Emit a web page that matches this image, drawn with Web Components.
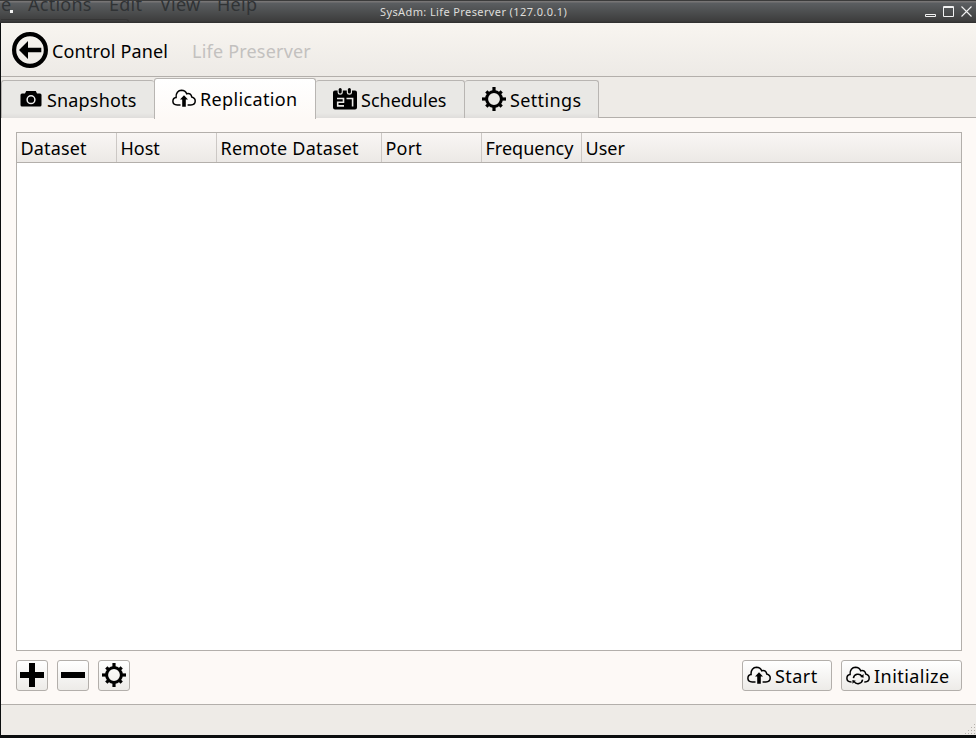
<!DOCTYPE html>
<html lang="en"><head><meta charset="utf-8"><title>SysAdm: Life Preserver</title>
<style>html,body{margin:0;height:100%;overflow:hidden;background:#0b0d0e}body{font-family:"Noto Sans",sans-serif;font-size:18px;color:#000}</style></head>
<body><sys-window></sys-window>
<script>
const define=(name,html)=>customElements.define(name,class extends HTMLElement{
 constructor(){super();this.attachShadow({mode:'open'});}
 connectedCallback(){const t=document.createElement('template');t.innerHTML='<style>*{box-sizing:border-box}</style>'+(typeof html==='function'?html(this):html);this.shadowRoot.replaceChildren(t.content.cloneNode(true));}
});
const cloud=(a,b)=>`<path d="M${a} 17.300H5.200C2.500 17.300.9 15.900.9 13.700c0-2.200 1.500-3.600 3.200-3.800C3.600 5.500 6.300 2.800 9.400 2.700c2.700 0 4.500 1.400 5.300 3.500 3-.8 4.800.7 5 3.200 2.200.5 3.500 2 3.500 4 0 2.400-1.700 3.900-4.300 3.900h${b}" fill="none" stroke="#000" stroke-width="1.500"/>`;
const gearTeeth=[0,45,90,135,180,225,270,315].map(a=>`<path d="M10.400 ${a%90?1.1:0}h3.200V5h-3.200z" transform="rotate(${a} 12 12)"/>`).join('');
const icons={
 back:'<circle cx="18" cy="18" r="15.900" fill="none" stroke="#000" stroke-width="4.200"/><path d="M7 18 16 9v6.800h13.300v4.400H16V27z"/>',
 camera:'<path d="M3 6.500h3l1.200-2.500h9.600L18 6.500h3q1.500 0 1.500 1.500v10q0 1.500-1.500 1.500H3q-1.500 0-1.500-1.500V8q0-1.500 1.500-1.500z"/><circle cx="12" cy="12.700" r="3.900" fill="none" stroke="#eee" stroke-width="1.500"/>',
 upload:'<g transform="translate(0 1.600)">'+cloud(8.5,-3.3)+'<path d="m12 7.700 4 4.300h-2.200v7.200h-3.600V12H8z"/></g>',
 sync:'<g transform="translate(0 1.600)">'+cloud(5.5,-.6)+'<path d="M7.400 13.500a4.700 4.700 0 0 1 8.500-1.900M16.600 15.100a4.700 4.700 0 0 1-8.500 1.900" fill="none" stroke="#000" stroke-width="1.500"/><path d="m14.200 12.400 3.400.7-.1-3.700zM9.800 16.200l-3.400-.7.1 3.700z"/></g>',
 calendar:'<path d="M2 3.600h20q2 0 2 2v15q0 2-2 2H2q-2 0-2-2v-15q0-2 2-2z"/><path d="M4.600 3v2.700q0 2 2.600 2t2.600-2V3zM13.800 3v2.700q0 2 2.600 2t2.600-2V3z" fill="#e9e8e5"/><rect x="5.700" y="1" width="3" height="5.600" rx="1.500"/><rect x="14.900" y="1" width="3" height="5.600" rx="1.500"/><path d="M4 11.500h6.500v3.700H4.700v3.700h6.300M13.500 11.500h6.100v8" fill="none" stroke="#e9e8e5" stroke-width="1.600"/>',
 gear:gearTeeth+'<circle cx="12" cy="12" r="7.400" fill="none" stroke="#000" stroke-width="3"/>',
 plus:'<path d="M9 0h6v9h9v6h-9v9H9v-9H0V9h9z"/>',
 minus:'<path d="M0 9h24v6H0z"/>'
};
define('sys-icon',e=>{const n=e.getAttribute('name');return `<style>:host{display:block;flex:none;width:24px;height:24px}svg{display:block;width:100%;height:100%;overflow:visible}</style><svg viewBox="${n==='back'?'0 0 36 36':'0 0 24 24'}">${icons[n]}</svg>`});
define('title-bar',`<style>:host{display:block;position:relative;height:23px;background:linear-gradient(#3b3b3b 0 1px,#777575 1px 2px,#5b5e61 3px,#4e5051 11px,#3d3d3d 21px,#2e2e2e);color:#deddda;font-size:11px;line-height:15px}
.ghost{position:absolute;left:0;top:-8px;color:#303335;font-size:18px;line-height:25px;white-space:nowrap;letter-spacing:.25px}.ghost span{position:absolute;top:0}
.title{position:absolute;left:380px;top:4px;white-space:nowrap;letter-spacing:.39px}
.edge{position:absolute;left:1px;top:19px;width:128px;height:4px;border-top:1px solid #353535;border-right:1px solid #353535;border-radius:0 3px 0 0}
.dot{position:absolute;left:10px;top:10px;width:3px;height:3px;background:#f1f1f1}
svg{position:absolute;left:925px;top:6px}</style><div class="edge"></div><div class="ghost"><span style="left:1px">e</span><span style="left:28px">Actions</span><span style="left:109px">Edit</span><span style="left:160px">View</span><span style="left:217px">Help</span></div><i class="dot"></i><span class="title">SysAdm: Life Preserver (127.0.0.1)</span>
<svg width="50" height="12" fill="none" stroke="#f1f1f1"><path d="M.5 8.500h10v2H.5zM18.500.5h10v10h-10zM18 1.500h11"/><path d="m36.500.5 10 10m0-10-10 10" stroke-width="1.100"/></svg>`);
define('crumb-bar',`<style>:host{display:flex;align-items:center;height:54px;padding:0 0 0 11px;background:linear-gradient(#f8f5f0,#edeae6);border-bottom:1px solid #b3afab}sys-icon{width:36px;height:36px;margin-top:1px}span{margin:4px 0 0 4px;line-height:25px;white-space:nowrap;letter-spacing:.15px}.off{color:#c3c1bf;margin-left:24px;letter-spacing:.2px}</style><sys-icon name="back"></sys-icon><span>Control Panel</span><span class="off">Life Preserver</span>`);
define('sys-tab',e=>`<style>:host{display:flex;align-items:flex-start;height:38px;margin-top:3px;padding:7px 0 0 17px;gap:4px;border:1px solid #b8b5b2;border-left-width:0;border-bottom:0;border-radius:3px 3px 0 0;background:linear-gradient(#e9e8e5 0 32px,#dfdddb);line-height:25px;white-space:nowrap}:host([active]){z-index:1;height:41px;margin-top:1px;padding-top:8px;border-left-width:1px;background:linear-gradient(#fff,#fdf9f6)}
sys-icon{margin-top:-1px}</style><sys-icon name="${e.getAttribute('icon')}"></sys-icon><slot></slot>`);
define('tab-bar',`<style>:host{display:flex;align-items:flex-start;height:41px;background:linear-gradient(#eeebe7 0 40px,#b3afab 40px)}</style><slot></slot>`);
define('data-table',()=>`<style>:host{display:flex;flex-direction:column;flex:1;border:1px solid #b3afab;background:#fff}.head{display:flex;height:30px;border-bottom:1px solid #b3afab;background:linear-gradient(#f9f6f4,#ece9e6)}.head span{height:29px;padding:3px 0 0 3.500px;border-right:1px solid #ccc8c5;line-height:25px;white-space:nowrap}.head span:last-child{flex:1;border:0}</style><div class="head">${[['Dataset',100,.15],['Host',100,0],['Remote Dataset',165,.2],['Port',100,.2],['Frequency',100,0],['User',379,0]].map(([t,w,s])=>`<span style="width:${w}px;letter-spacing:${s}px">${t}</span>`).join('')}</div>`);
define('sys-button',e=>`<style>:host{display:flex;height:31px;width:32px;padding:2px 3px;gap:4px;border:1px solid #b3afab;border-radius:3px;background:linear-gradient(#fff,#edebe8);line-height:25px;white-space:nowrap}::slotted(span){margin-top:1px;letter-spacing:.45px}</style><sys-icon name="${e.getAttribute('icon')}"></sys-icon><slot></slot>`);
define('action-bar',`<style>:host{display:flex;gap:9px;padding-top:9px}.space{flex:1}.wide{padding-left:4px}</style><sys-button icon="plus"></sys-button><sys-button icon="minus"></sys-button><sys-button icon="gear"></sys-button><div class="space"></div><sys-button class="wide" style="width:90px" icon="upload"><span>Start</span></sys-button><sys-button class="wide" style="width:121px" icon="sync"><span>Initialize</span></sys-button>`);
define('status-bar',`<style>:host{display:flex;justify-content:flex-end;align-items:flex-end;height:31px;border-top:1px solid #b3afab;background:#eeebe7}svg{display:block}</style><svg width="12" height="12" fill="#b5b1ad"><path d="M1 10h1v1H1zM4 10h1v1H4zM7 10h1v1H7zM10 10h1v1h-1zM4 7h1v1H4zM7 7h1v1H7zM10 7h1v1h-1zM7 4h1v1H7zM10 4h1v1h-1zM10 1h1v1h-1z"/></svg>`);
define('sys-window',`<style>:host{display:flex;flex-direction:column;width:976px;height:735px}.body{display:flex;flex:1;flex-direction:column;margin-left:1px;background:#fdf9f6;min-height:0}.content{display:flex;flex:1;flex-direction:column;padding:14px 14px 13px 15px}</style><title-bar></title-bar><div class="body"><crumb-bar></crumb-bar><tab-bar><sys-tab icon="camera" style="width:153px;border-right:0;border-left:1px solid #b8b5b2;letter-spacing:.17px">Snapshots</sys-tab><sys-tab icon="upload" active style="width:162px;letter-spacing:.36px">Replication</sys-tab><sys-tab icon="calendar" style="width:149px">Schedules</sys-tab><sys-tab icon="gear" style="width:134px;letter-spacing:.36px">Settings</sys-tab></tab-bar><div class="content"><data-table></data-table><action-bar></action-bar></div><status-bar></status-bar></div>`);
</script></body></html>
